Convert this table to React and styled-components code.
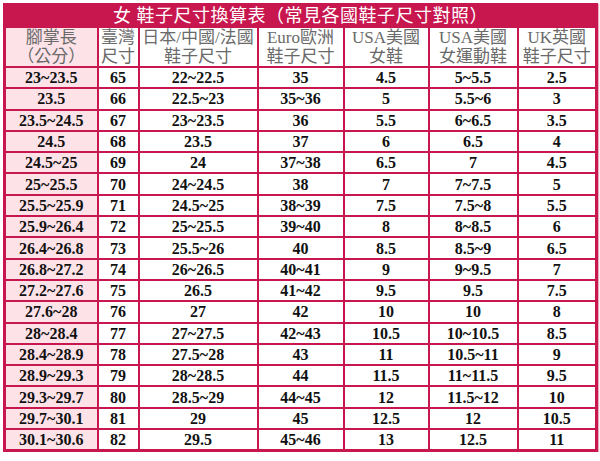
import React from 'react';
import styled, { createGlobalStyle } from 'styled-components';

const Global = createGlobalStyle`
  body {
    margin: 0;
    background: #ffffff;
    font-family: "Liberation Serif", "Noto Sans CJK TC", serif;
  }
`;

const CRIMSON = '#c8164f';

const Page = styled.div`
  padding: 3px 0 0 3px;
`;

const Table = styled.table`
  width: 592px;
  border-collapse: collapse;
  table-layout: fixed;
  border: 3px solid ${CRIMSON};
  box-shadow: 1px 1px 1px rgba(200, 22, 79, 0.35);
`;

const TitleCell = styled.th`
  height: 20px;
  padding: 0;
  background: ${CRIMSON};
  color: #ffffff;
  font-family: "Liberation Serif", "Noto Sans CJK TC", serif;
  font-size: 18px;
  font-weight: 400;
  letter-spacing: 0.5px;
  text-align: center;
  line-height: 20px;
  border: 2px solid ${CRIMSON};
`;

const HeadCell = styled.th`
  height: 38px;
  padding: 0;
  background: ${p => (p.$pink ? '#fde2e8' : '#ffffff')};
  color: #6a6a6a;
  font-family: "Liberation Serif", "Noto Sans CJK TC", serif;
  font-size: 17px;
  font-weight: 400;
  line-height: 19px;
  text-align: center;
  white-space: nowrap;
  border: 2px solid ${CRIMSON};
`;

const Cell = styled.td`
  height: 19.3px;
  padding: 0;
  background: ${p => (p.$pink ? '#fde2e8' : '#ffffff')};
  color: #111111;
  font-family: "Liberation Serif", "Noto Sans CJK TC", serif;
  font-size: 16px;
  font-weight: 700;
  line-height: 19px;
  text-align: center;
  white-space: nowrap;
  border: 2px solid ${CRIMSON};
`;

const widths = [93, 41, 119, 86, 85, 89, 79];

const headers = [
  ['腳掌長', '（公分）'],
  ['臺灣', '尺寸'],
  ['日本/中國/法國', '鞋子尺寸'],
  ['Euro歐洲', '鞋子尺寸'],
  ['USA美國', '女鞋'],
  ['USA美國', '女運動鞋'],
  ['UK英國', '鞋子尺寸'],
];

const rows = [
  ['23~23.5', '65', '22~22.5', '35', '4.5', '5~5.5', '2.5'],
  ['23.5', '66', '22.5~23', '35~36', '5', '5.5~6', '3'],
  ['23.5~24.5', '67', '23~23.5', '36', '5.5', '6~6.5', '3.5'],
  ['24.5', '68', '23.5', '37', '6', '6.5', '4'],
  ['24.5~25', '69', '24', '37~38', '6.5', '7', '4.5'],
  ['25~25.5', '70', '24~24.5', '38', '7', '7~7.5', '5'],
  ['25.5~25.9', '71', '24.5~25', '38~39', '7.5', '7.5~8', '5.5'],
  ['25.9~26.4', '72', '25~25.5', '39~40', '8', '8~8.5', '6'],
  ['26.4~26.8', '73', '25.5~26', '40', '8.5', '8.5~9', '6.5'],
  ['26.8~27.2', '74', '26~26.5', '40~41', '9', '9~9.5', '7'],
  ['27.2~27.6', '75', '26.5', '41~42', '9.5', '9.5', '7.5'],
  ['27.6~28', '76', '27', '42', '10', '10', '8'],
  ['28~28.4', '77', '27~27.5', '42~43', '10.5', '10~10.5', '8.5'],
  ['28.4~28.9', '78', '27.5~28', '43', '11', '10.5~11', '9'],
  ['28.9~29.3', '79', '28~28.5', '44', '11.5', '11~11.5', '9.5'],
  ['29.3~29.7', '80', '28.5~29', '44~45', '12', '11.5~12', '10'],
  ['29.7~30.1', '81', '29', '45', '12.5', '12', '10.5'],
  ['30.1~30.6', '82', '29.5', '45~46', '13', '12.5', '11'],
];

export default function App() {
  return (
    <Page>
      <Global />
      <Table>
        <colgroup>
          {widths.map((w, i) => (
            <col key={i} style={{ width: w }} />
          ))}
        </colgroup>
        <thead>
          <tr>
            <TitleCell colSpan={7}>女 鞋子尺寸換算表（常見各國鞋子尺寸對照）</TitleCell>
          </tr>
          <tr>
            {headers.map((h, i) => (
              <HeadCell key={i} $pink={i === 0}>
                {h[0]}
                <br />
                {h[1]}
              </HeadCell>
            ))}
          </tr>
        </thead>
        <tbody>
          {rows.map((r, ri) => (
            <tr key={ri}>
              {r.map((v, ci) => (
                <Cell key={ci} $pink={ci === 0}>{v}</Cell>
              ))}
            </tr>
          ))}
        </tbody>
      </Table>
    </Page>
  );
}
